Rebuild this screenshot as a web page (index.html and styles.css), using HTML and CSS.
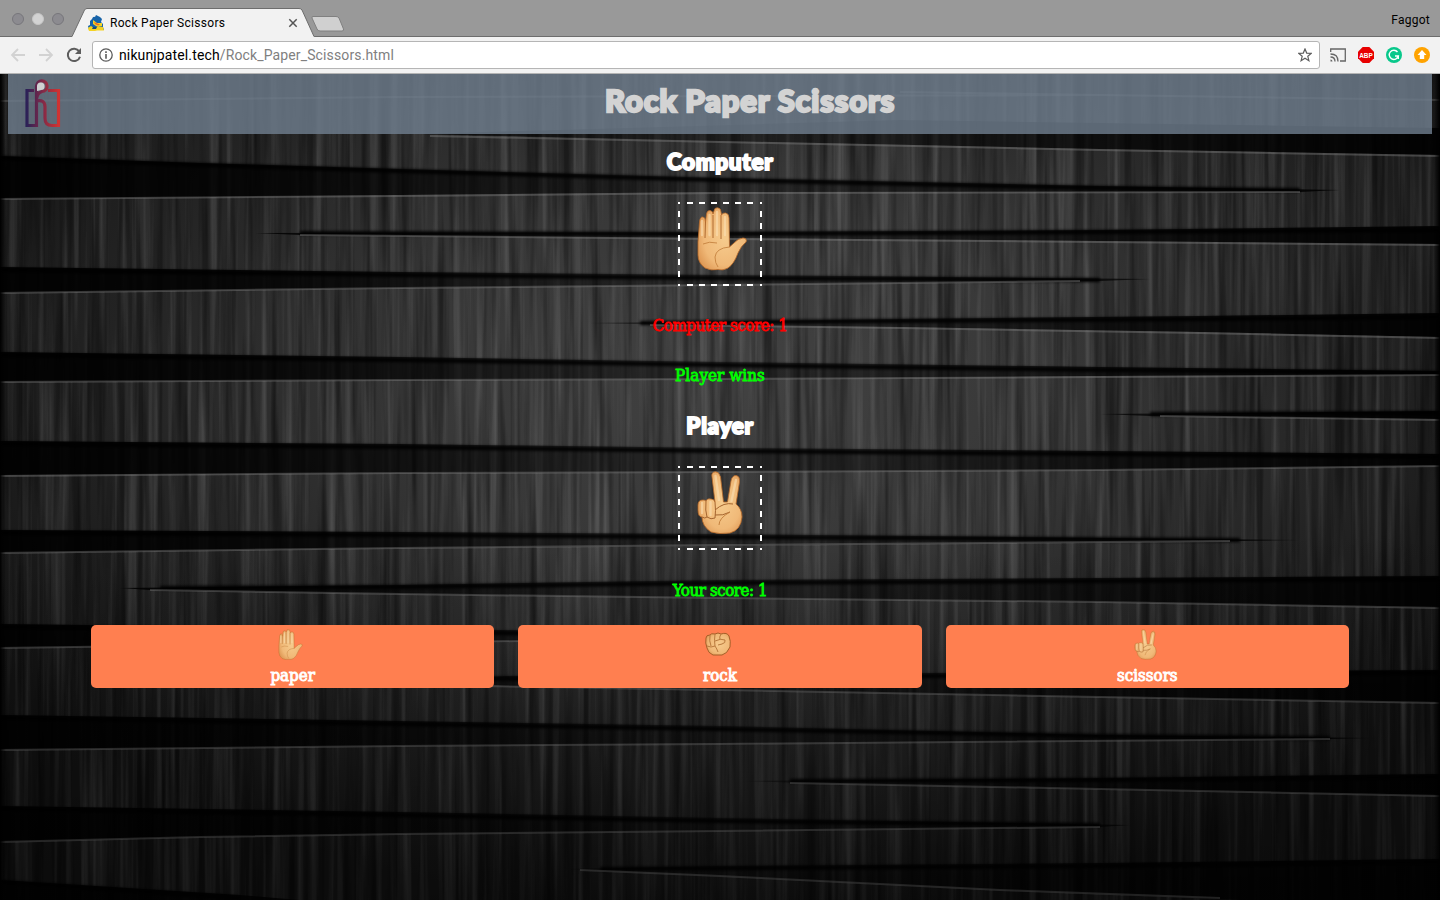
FILE: index.html
```html
<!DOCTYPE html>
<html lang="en">
<head>
<meta charset="utf-8">
<title>Rock Paper Scissors</title>
<link rel="stylesheet" href="styles.css">
</head>
<body>
<svg class="defs" width="0" height="0" aria-hidden="true">
  <defs>
    <radialGradient id="skin" cx=".55" cy=".5" r=".65"><stop offset="0" stop-color="#f6cb8d"/><stop offset=".65" stop-color="#f0b978"/><stop offset="1" stop-color="#dc9450"/></radialGradient>
    <linearGradient id="logoGrad" x1="0" x2="1"><stop offset="0" stop-color="#241552"/><stop offset=".45" stop-color="#7f1d42"/><stop offset="1" stop-color="#e32a26"/></linearGradient>
    <symbol id="hand" viewBox="0 0 50 64">
      <path d="M1 35 L2.500 15 Q3 9.500 6 10 Q8.500 10.500 8.500 15 L9.500 7 Q10 3.300 13 3.500 Q16 4 16 7 L17 4 Q17.500 .5 20.500 .8 Q24 1 24 5 L24.500 8 Q25.500 5.600 28.500 6 Q32 6.500 32 11 L32.500 40 L37 36 Q41 31.500 46 31 Q50.500 31.500 49 35 Q44 39 41 46 Q37 57 31 61 Q26 64 21 62.500 Q14 64 8 61 Q1 56 1 48Z" fill="url(#skin)" stroke="#b76a29" stroke-width=".8"/>
      <path d="M8.500 15 L8 31 M16 8 V31 M24 8 V32" fill="none" stroke="#b06b30" stroke-width="1"/>
      <path d="M6 37 Q12 34 20 36 M32.500 40 Q19 41 18 50 Q18 56 21 60" fill="none" stroke="#c5823f" stroke-width=".9"/>
      <path d="M5 14 V28 M12.500 8 V28 M20 5 V28 M28 10 V28" fill="none" stroke="#fae0b4" stroke-width="2.400" opacity=".6" stroke-linecap="round"/>
    </symbol>
    <symbol id="victory" viewBox="0 0 46 64">
      <path d="M5 46 Q1 46 1 39 V34 Q1 29 6 29 Q8 29 9 30 Q10 27 14 28 Q17 28 18 31 L15 6 Q14 1 18.500 .8 Q22 .6 23.500 6 L26.500 31 L30.500 31 L34 10 Q35 4.500 39 4.500 Q43 5 42.500 11 L39 33 Q45 38 45 46 Q44 59 33 62 Q22 63.500 14 61 Q5 55 5 46Z" fill="url(#skin)" stroke="#b76a29" stroke-width=".8"/>
      <path d="M9 30 Q8 40 10 46 Q14 49 18 47 Q19 40 18 31 M5 46 Q8 48 10 46 M18 44 Q26 45 33 41 M18 39 Q27 31 36 33" fill="none" stroke="#a5652f" stroke-width="1"/>
      <path d="M33 41 Q22 47 22 54" fill="none" stroke="#c5823f" stroke-width="1"/>
      <path d="M18.500 5 L22 29 M39 9 L34.500 30 M5 32 V42 M13.500 31 V44" fill="none" stroke="#fae0b4" stroke-width="2.400" opacity=".6" stroke-linecap="round"/>
    </symbol>
    <symbol id="fist" viewBox="0 0 26 24">
      <path d="M1 6 Q1 3 5 3 Q6 1 10 2 Q13 0 16 2 Q22 0 24 4 Q26 9 25 15 Q22 22 17 23 H8 Q3 21 2 16 Q0 11 1 6Z" fill="url(#skin)" stroke="#a65e28"/>
      <path d="M5 3 Q4 9 6 14 M10 2 Q9 9 10 14 M16 2 Q14 5 15 8 M2 14 Q6 16 10 14 Q12 17 13 20 M10 9 Q16 6 20 8 Q21 11 17 12 L13 13" fill="none" stroke="#b97a3e" stroke-width="1"/>
    </symbol>
    <symbol id="dashes" viewBox="0 0 84 84">
      <path d="M0 1 H84 M0 83 H84 M1 0 V84 M83 0 V84" fill="none" stroke="#fff" stroke-width="2" stroke-dasharray="2 7 6 6 6 6 6 6 6 6 6 6 6 7 2 0"/>
    </symbol>
  </defs>
</svg>

<header class="chrome">
  <div class="tabstrip">
    <div class="lights"><i></i><i class="mid"></i><i></i></div>
    <div class="tab">
      <svg class="tab-shape" width="243" height="30" viewBox="0 0 243 30"><path d="M0 28.500 L12.500 2 Q13.500 .5 15 .5 H227 Q229 .5 230 2 L242 28.500 V30 H0Z" fill="#f2f2f2"/><path d="M0 28.500 L12.500 2 Q13.500 .5 15 .5 H227 Q229 .5 230 2 L242 28.500" fill="none" stroke="#6d6d6d"/></svg>
      <svg class="favicon" width="16" height="16" viewBox="0 0 16 16"><path d="M4 4 Q5 1 7 2 L8 0 L10 1 L12 2 L14 4 L13 7 L15 9 V12 L16 15 H1 L0 11 L2 10 L2 6Z" fill="#1763a8"/><path d="M5 5 L9 8 L14 8 L14 11 L8 11 L5 9Z" fill="#f5d323"/><path d="M6 7 L12 9.500 L10 10.500 L7 9Z" fill="#ee6a2a"/><path d="M0 13 L3 11 L6 13 L10 11 L15 12 L16 15.500 H9 L7 16 H1Z" fill="#f5d323"/><path d="M5 12 H9 L8 14 H4Z" fill="#174b7c"/></svg>
      <span class="tab-title">Rock Paper Scissors</span>
      <svg class="close" width="10" height="10" viewBox="0 0 10 10"><path d="M1.300 1.300 L8.700 8.700 M8.700 1.300 L1.300 8.700" stroke="#555" stroke-width="1.500"/></svg>
    </div>
    <svg class="newtab" width="34" height="18" viewBox="0 0 34 18"><path d="M2 1.500 H25 Q27 1.500 28 3 L32.500 14 Q33 16 31 16 H9 Q7 16 6 14 L1 3 Q.6 1.500 2 1.500Z" fill="#d0d0d0" stroke="#808080"/></svg>
    <span class="profile">Faggot</span>
  </div>
  <div class="toolbar">
    <svg width="16" height="16" viewBox="0 0 16 16"><path d="M15 8 H2 M8 2 L2 8 L8 14" fill="none" stroke="#d2d2d2" stroke-width="1.800"/></svg>
    <svg class="forward" width="16" height="16" viewBox="0 0 16 16"><path d="M1 8 H14 M8 2 L14 8 L8 14" fill="none" stroke="#d2d2d2" stroke-width="1.800"/></svg>
    <svg class="reload" width="16" height="16" viewBox="0 0 16 16"><path d="M13.200 4.400 A6.200 6.200 0 1 0 14 9.700" fill="none" stroke="#5d5d5d" stroke-width="2"/><path d="M15 1 V7 H9Z" fill="#5d5d5d"/></svg>
    <div class="address">
      <svg width="14" height="14" viewBox="0 0 14 14"><circle cx="7" cy="7" r="6.200" fill="none" stroke="#5a5a5a" stroke-width="1.300"/><path d="M7 6 V10.800 M7 3.200 V4.900" stroke="#5a5a5a" stroke-width="1.600"/></svg>
      <span class="url">nikunjpatel.tech<span class="path">/Rock_Paper_Scissors.html</span></span>
      <svg class="star" width="14" height="14" viewBox="0 0 14 14"><path d="M7 1 L8.700 5.100 L13.200 5.400 L9.800 8.300 L10.900 12.700 L7 10.300 L3.100 12.700 L4.200 8.300 L.8 5.400 L5.300 5.100Z" fill="none" stroke="#5c5c5c" stroke-width="1.200"/></svg>
    </div>
    <div class="extensions">
      <svg width="16" height="14" viewBox="0 0 16 14"><path d="M.7 4 V1 H15.300 V13 H10 M.5 6 Q8 6 8 13.500 M.5 9 Q5 9 5 13.500" fill="none" stroke="#666" stroke-width="1.300"/><path d="M.5 11.500 Q2.500 11.500 2.500 13.500 H.5Z" fill="#666"/></svg>
      <svg width="16" height="16" viewBox="0 0 16 16"><path d="M4.700 0 H11.300 L16 4.700 V11.300 L11.300 16 H4.700 L0 11.300 V4.700Z" fill="#e80000"/><text x="8" y="10.700" class="abp" textLength="13.500" lengthAdjust="spacingAndGlyphs">ABP</text></svg>
      <svg width="16" height="16" viewBox="0 0 16 16"><circle cx="8" cy="8" r="8" fill="#09c88b"/><path d="M11.500 5 A4.600 4.600 0 1 0 12.300 9 H9 M12.300 9 V12" fill="none" stroke="#fff" stroke-width="1.400"/></svg>
      <svg width="16" height="16" viewBox="0 0 16 16"><circle cx="8" cy="8" r="8" fill="#ffa300"/><path d="M8 3 L12.500 8 H10.200 V12 H5.800 V8 H3.500Z" fill="#fff"/></svg>
    </div>
  </div>
</header>

<main class="page">
  <svg class="wood" width="1440" height="827" viewBox="0 73 1440 827" aria-hidden="true">
    <defs>
      <radialGradient id="light" gradientUnits="userSpaceOnUse" cx="0" cy="0" r="1" gradientTransform="translate(740 375) scale(880 540)"><stop offset="0" stop-color="#424242"/><stop offset=".35" stop-color="#383838"/><stop offset=".75" stop-color="#212121"/><stop offset="1" stop-color="#131313"/></radialGradient>
      <linearGradient id="gap" gradientUnits="userSpaceOnUse" x1="0" x2="1440" y1="0" y2="0"><stop offset="0" stop-color="#000" stop-opacity=".92"/><stop offset=".2" stop-color="#000" stop-opacity=".8"/><stop offset=".5" stop-color="#000" stop-opacity=".35"/><stop offset=".8" stop-color="#000" stop-opacity=".72"/><stop offset="1" stop-color="#000" stop-opacity=".92"/></linearGradient>
      <linearGradient id="edges" x1="0" x2="1"><stop offset="0" stop-color="#000"/><stop offset=".004" stop-color="#000" stop-opacity="0"/><stop offset=".996" stop-color="#000" stop-opacity="0"/><stop offset="1" stop-color="#000"/></linearGradient>
      <linearGradient id="floor" x1="0" x2="0" y1="0" y2="1"><stop offset=".55" stop-color="#000" stop-opacity="0"/><stop offset="1" stop-color="#000" stop-opacity=".4"/></linearGradient>
      <filter id="lightGrain" x="0" y="0" width="1" height="1"><feTurbulence type="fractalNoise" baseFrequency=".13 .003" numOctaves="3" seed="7"/><feColorMatrix values="0 0 0 0 1  0 0 0 0 1  0 0 0 0 1  0 0 0 .8 -.36"/></filter>
      <filter id="darkGrain" x="0" y="0" width="1" height="1"><feTurbulence type="fractalNoise" baseFrequency=".11 .004" numOctaves="3" seed="21"/><feColorMatrix values="0 0 0 0 0  0 0 0 0 0  0 0 0 0 0  0 0 0 2.600 -1.150"/></filter>
      <filter id="soft" x="-.05" y="-.5" width="1.100" height="2"><feGaussianBlur stdDeviation=".5"/></filter>
      <filter id="shade" x="-.05" y="-.5" width="1.100" height="2"><feGaussianBlur stdDeviation="1.600"/></filter>
    </defs>
    <rect y="73" width="1440" height="827" fill="url(#light)"/>
    <rect y="73" width="1440" height="827" filter="url(#lightGrain)" opacity=".4"/>
    <rect y="73" width="1440" height="827" filter="url(#darkGrain)" opacity=".45"/>
    <g fill="url(#gap)" filter="url(#soft)">
      <path d="M420 134 L900 120 L1440 128 V155 L1100 149 L720 141Z"/>
      <path d="M0 156 L200 163 L400 169 L720 178 L1100 186 L1340 190 L1300 192 H720 L400 195 L0 199Z"/>
      <path d="M255 233 L700 232 L1100 230 L1440 226 V244 L1100 241 L720 238 L300 235Z"/>
      <path d="M0 267 L400 272 L720 275 L1150 279 L1100 281 L720 285 L400 288 L0 293Z"/>
      <path d="M590 323 L900 319 L1200 316 L1440 313 V337 L1200 332 L900 327 L680 325Z"/>
      <path d="M0 352 L400 357 L720 362 L1100 367 L1440 371 V375 L1100 376 L720 379 L400 380 L0 382Z"/>
      <path d="M1100 414 L1440 411 V419 L1150 416Z"/>
      <path d="M0 441 L400 444 L720 448 L1100 451 L1440 454 V466 L1100 470 L720 472 L400 473 L0 475Z"/>
      <path d="M0 530 L400 532 L720 534 L1300 540 L1240 541 L720 546 L400 548 L0 553Z"/>
      <path d="M120 588 L400 585 L720 580 L1100 578 L1440 576 V608 L1100 602 L720 598 L400 594 L150 590Z"/>
      <path d="M0 624 L500 630 L900 638 L520 641 L0 648Z"/>
      <path d="M430 680 L505 676 L930 673 L1440 670 V703 L1100 697 L720 690 L505 686Z"/>
      <path d="M0 715 L400 721 L720 726 L1100 735 L1370 738 L1330 739 L720 743 L400 746 L0 750Z"/>
      <path d="M745 781 L1100 778 L1440 774 V796 L1100 789 L800 783Z"/>
      <path d="M0 806 L400 812 L720 818 L1130 825 L1100 827 L720 831 L400 834 L200 837 L0 842Z"/>
      <path d="M570 869 L720 866 L1100 863 L1440 859 V900 H1240 L1000 890 L720 876Z"/>
      <path d="M0 880 L240 895 L300 900 H0Z"/>
    </g>
    <g fill="none" stroke="#000" stroke-width="4" filter="url(#shade)">
      <path d="M0 158 L200 165 L400 171 L720 180 L1100 188 L1300 190"/>
      <path d="M300 233 L700 234 L1100 232 L1440 230"/>
      <path d="M0 270 L400 275 L720 278 L1100 280"/>
      <path d="M640 323 L900 321 L1200 319 L1440 317"/>
      <path d="M0 355 L400 360 L720 365 L1100 370 L1440 373"/>
      <path d="M1150 414 L1440 413"/>
      <path d="M0 444 L400 447 L720 451 L1100 454 L1440 457"/>
      <path d="M0 533 L400 535 L720 537 L1240 540"/>
      <path d="M160 588 L400 587 L720 583 L1100 581 L1440 579"/>
      <path d="M0 627 L500 633 L800 637 M450 679 L930 676 L1440 673"/>
      <path d="M0 718 L400 724 L720 729 L1100 736 L1330 738"/>
      <path d="M790 781 L1100 780 L1440 777"/>
      <path d="M0 809 L400 815 L720 821 L1100 825"/>
      <path d="M600 869 L1100 866 L1440 862 M0 882 L240 898"/>
    </g>
    <g fill="none" stroke="#888" stroke-opacity=".38" stroke-width="2" filter="url(#soft)">
      <path d="M0 101 L400 97 L1100 95 M900 92 L1440 100" stroke-opacity=".3"/>
      <path d="M430 136 L720 142 L1100 150 L1440 156"/>
      <path d="M0 199 L400 196 L720 193 L1300 192"/>
      <path d="M300 235 L720 239 L1100 242 L1440 245"/>
      <path d="M0 293 L400 288 L720 285 L1080 281"/>
      <path d="M650 325 L900 328 L1200 333 L1440 338"/>
      <path d="M0 382 L400 380 L720 379 L1100 377 L1440 375"/>
      <path d="M1160 416 L1440 420"/>
      <path d="M0 476 L400 473 L720 472 L1100 470 L1440 466"/>
      <path d="M0 553 L400 548 L720 545 L1230 541"/>
      <path d="M150 590 L400 594 L720 598 L1100 602 L1440 608"/>
      <path d="M0 648 L520 641 L800 638 M480 686 L720 690 L1100 697 L1440 703"/>
      <path d="M0 750 L400 746 L720 744 L1330 739"/>
      <path d="M790 783 L1100 789 L1440 796"/>
      <path d="M0 842 L200 837 L400 834 L720 831 L1100 827"/>
      <path d="M580 870 L720 876 L1000 890 L1220 898"/>
    </g>
    <rect y="73" width="1440" height="827" fill="url(#floor)"/>
    <rect y="73" width="1440" height="827" fill="url(#edges)"/>
  </svg>
  <div class="content">
    <div class="banner">
      <svg class="logo" width="36" height="50" viewBox="0 0 36 50"><path d="M9 11.500 H2 V46.500 H11.500 V7 A5.300 5.300 0 1 1 17 12.500 Q11.500 14 11.500 22 Q20 20 20 28 V39 Q20 46.500 27 46.500 H33.500 V11.500 H23" fill="none" stroke="url(#logoGrad)" stroke-width="3.200"/><path d="M12 12 V7.500 A3.800 3.800 0 1 1 16 11Z" fill="#e5e2e2"/></svg>
      <h1>Rock Paper Scissors</h1>
    </div>
    <h2>Computer</h2>
    <div class="choice"><svg class="frame" width="84" height="84"><use href="#dashes"/></svg><svg class="palm" width="50" height="64"><use href="#hand"/></svg></div>
    <p class="lost">Computer score: 1</p>
    <p class="result">Player wins</p>
    <h2 class="player">Player</h2>
    <div class="choice"><svg class="frame" width="84" height="84"><use href="#dashes"/></svg><svg width="46" height="64"><use href="#victory"/></svg></div>
    <p class="won">Your score: 1</p>
    <div class="buttons">
      <button><svg width="25" height="31"><use href="#hand"/></svg><span>paper</span></button>
      <button><svg width="26" height="24" class="rock"><use href="#fist"/></svg><span>rock</span></button>
      <button><svg width="23" height="31"><use href="#victory"/></svg><span>scissors</span></button>
    </div>
  </div>
</main>
</body>
</html>
```
FILE: styles.css
```css
* { box-sizing: border-box; }
body { margin: 0; width: 1440px; height: 900px; overflow: hidden; background: #000; font-family: Roboto, "Noto Sans", sans-serif; }
svg { display: block; flex: none; }
.defs { position: absolute; }
.chrome { height: 74px; }
.tabstrip { height: 37px; display: flex; background: #999; border-bottom: 1px solid #6d6d6d; }
.lights { display: flex; gap: 8px; padding: 13px 0 0 12px; width: 72px; }
.lights i { width: 12px; height: 12px; border-radius: 50%; background: #8c8b90; border: 1px solid #77767b; }
.lights .mid { background: #d3d3d3; border-color: #c6c6c6; }
.tab { position: relative; width: 243px; height: 30px; margin-top: 8px; display: flex; align-items: center; padding: 0 17px 0 16px; }
.tab-shape { position: absolute; left: 0; top: 0; }
.favicon, .tab-title, .close { position: relative; }
.tab-title { margin-left: 6px; font-size: 12px; letter-spacing: .3px; color: #000; flex: 1; white-space: nowrap; }
.newtab { margin: 15px 0 0 -4px; }
.profile { margin: 12px 10px 0 auto; font-size: 12px; line-height: 16px; letter-spacing: .27px; color: #000; }
.toolbar { height: 37px; background: #f2f2f2; border-bottom: 1px solid #b4b4b4; display: flex; align-items: center; padding: 0 10px; }
.forward { margin-left: 12px; }
.reload { margin-left: 12px; }
.address { width: 1228px; height: 28px; margin-left: 10px; background: #fff; border: 1px solid #b5b5b5; border-radius: 3px; display: flex; align-items: center; padding: 0 7px 0 6px; }
.url { margin-left: 6px; font-size: 14px; letter-spacing: .13px; color: #000; flex: 1; }
.path { color: #808080; }
.extensions { display: flex; align-items: center; gap: 12px; margin-left: 10px; }
.abp { font: bold 7.5px "Liberation Sans", sans-serif; fill: #fff; text-anchor: middle; }
.page { position: relative; height: 826px; }
.wood { position: absolute; left: 0; top: -1px; z-index: -1; }
.content { display: flex; flex-direction: column; align-items: center; padding: 0 8px; }
.banner { width: 100%; height: 60px; background: rgba(112, 128, 144, .8); display: flex; align-items: center; padding-left: 17px; }
.logo { opacity: .85; }
h1, h2, p { margin: 0; }
h1, h2 { font-family: Lato, sans-serif; font-weight: 900; paint-order: stroke fill; stroke-linejoin: round; }
h1 { flex: 1; margin: -8px 0 0 7px; text-align: center; font-size: 31px; letter-spacing: .8px; color: #d3d3d3; -webkit-text-stroke: 2.4px #d3d3d3; }
h2 { margin-top: 10px; font-size: 22.5px; line-height: 36px; letter-spacing: .7px; color: #fff; -webkit-text-stroke: 2px #fff; }
.choice { position: relative; width: 84px; height: 84px; margin-top: 22px; display: flex; justify-content: center; padding-top: 5px; }
.frame { position: absolute; left: 0; top: 0; }
.palm { margin-left: 4px; }
p, button { font-family: "DejaVu Serif Condensed", "DejaVu Serif", serif; font-stretch: condensed; font-size: 16.8px; line-height: 24px; letter-spacing: -.45px; }
p { -webkit-text-stroke: .8px currentColor; }
.lost { margin-top: 27px; color: #f00; }
.result { margin-top: 26px; color: #0f0; letter-spacing: .1px; }
.player { margin-top: 21px; }
.won { margin-top: 28px; color: #0f0; }
.buttons { display: grid; grid-template-columns: repeat(3, 1fr); gap: 24px; width: 1258px; margin-top: 23px; }
button { height: 63px; border: 0; border-radius: 5px; background: #ff7f50; color: #fff; padding: 4px 0 0; display: flex; flex-direction: column; align-items: center; letter-spacing: 0; -webkit-text-stroke: .9px #fff; }
button svg { height: 31px; margin-right: 4px; }
button .rock { height: 24px; margin: 3px 4px 4px 0; }
button span { margin-top: 3px; }
```
